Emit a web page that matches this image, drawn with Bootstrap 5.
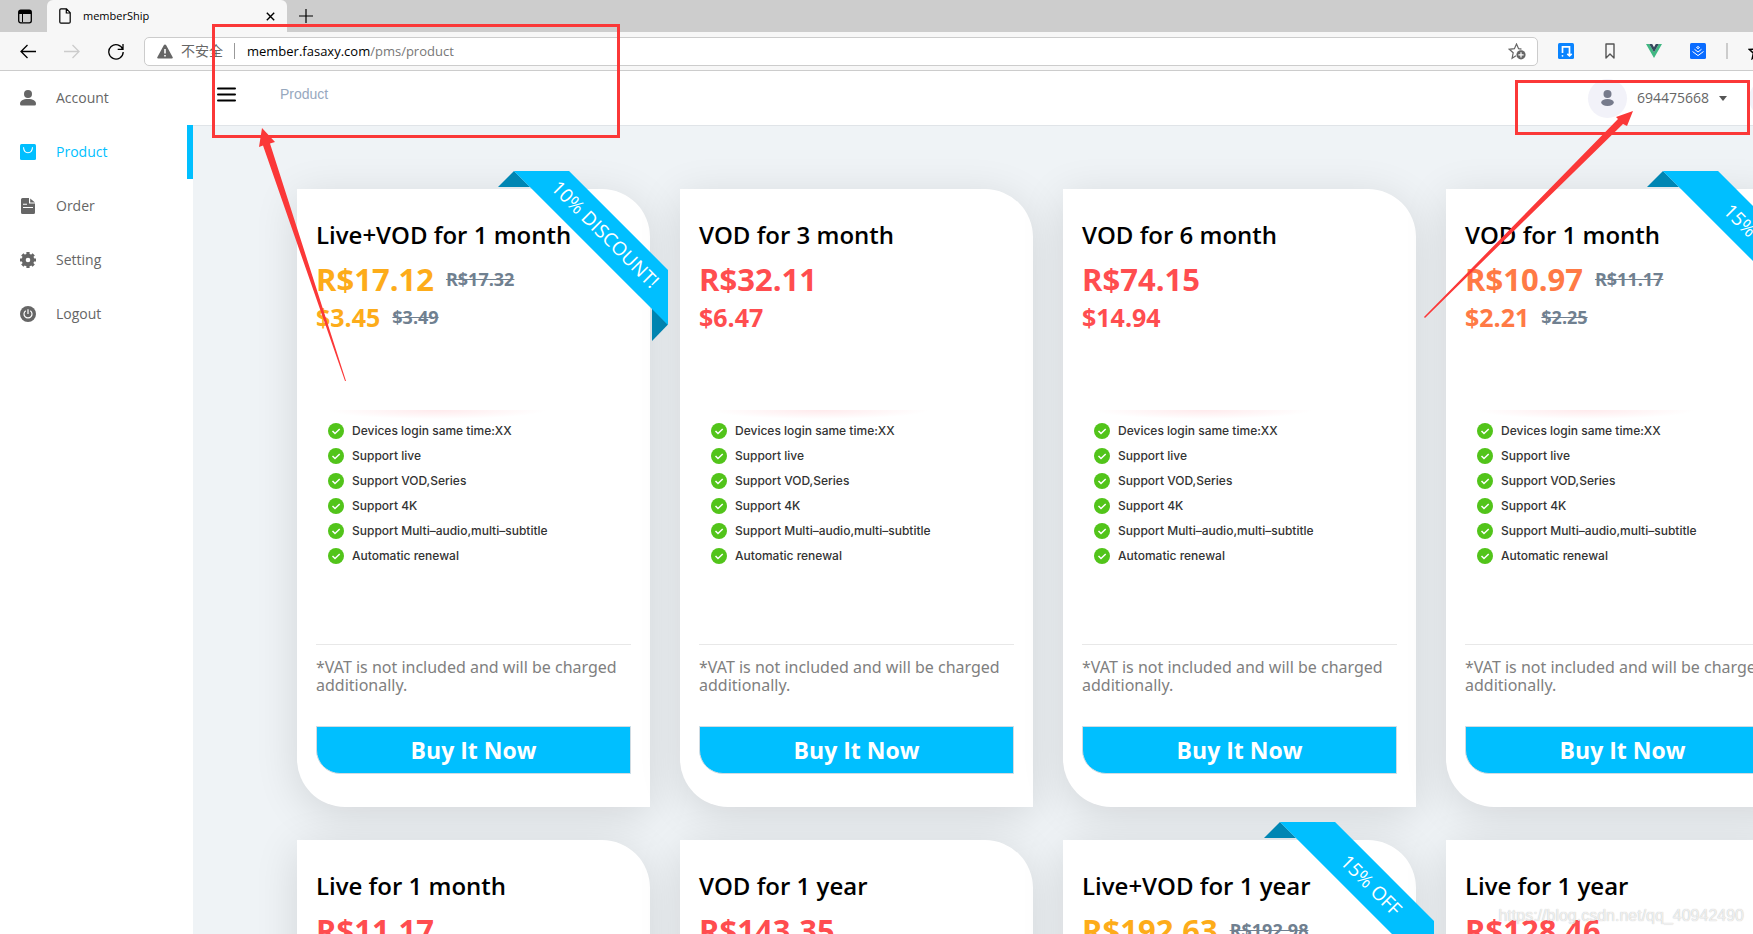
<!DOCTYPE html>
<html lang="en">
<head>
<meta charset="utf-8">
<meta name="viewport" content="width=device-width, initial-scale=1">
<title>memberShip</title>
<link rel="stylesheet" href="https://cdn.jsdelivr.net/npm/bootstrap@5.3.0/dist/css/bootstrap.min.css">
<style>
  :root { --brand: #00bfff; --fold: #0086b3; --ink: #666; --canvas: #eff3f6; --note: #fb3838; }
  body { font-family: "Open Sans", "Noto Sans CJK SC", sans-serif; font-size: 14px; line-height: 20px; color: #000; }
  svg { display: block; flex: none; }
  button { font-family: inherit; }

  /* browser frame */
  .tab-strip { height: 32px; background: #cdcdcd; }
  .tab-tools { width: 47px; padding-left: 3px; }
  .page-tab { width: 240px; padding: 0 12px; background: #f7f7f7; border-radius: 6px 6px 0 0; font-size: 11px; line-height: 16px; gap: 12px; }
  .plain-btn { border: 0; background: none; padding: 0; color: #000; }
  .tool-strip { height: 39px; background: #f7f7f7; border-bottom: 1px solid #ccc; padding-left: 20px; }
  .nav-tools { width: 124px; gap: 28px; }
  .address { height: 29px; background: #fff; border: 1px solid #ccc; border-radius: 5px; padding: 0 11px 0 12px; }
  .address .insecure { color: #666; padding: 0 11px 0 8px; }
  .address .divider { width: 1px; height: 16px; background: #999; }
  .address .url { padding-left: 12px; color: #777; font-size: 13px; }
  .address .url b { font-weight: 400; color: #000; }
  .ext-tools { width: 215px; padding-left: 20px; gap: 28px; overflow: hidden; }
  .ext-tools .ext-end { gap: 20px; margin-left: -8px; }
  .ext-tools .divider { width: 2px; height: 16px; background: #ccc; }

  /* application */
  .side { width: 193px; flex: none; background: #fff; }
  .side a { height: 54px; padding-left: 20px; gap: 20px; color: var(--ink); text-decoration: none; font-size: 14px; border-right: 6px solid transparent; }
  .side a.active { color: var(--brand); border-color: var(--brand); }
  .top-line { height: 55px; border-bottom: 1px solid #e0e4e8; background: #fff; padding-left: 24px; overflow: hidden; }
  .crumb { color: #97a8be; font-family: "Liberation Sans", sans-serif; text-decoration: none; margin-left: 44px; }
  .who { color: var(--ink); gap: 10px; margin-right: 22px; font-size: 14px; }
  .avatar { width: 39px; height: 39px; border-radius: 50%; background: #f2f2f9; color: #777b8c; flex: none; }
  .avatar.next { margin-right: -35px; }
  .caret { border: 4px solid transparent; border-top: 5px solid #555; border-bottom: 0; }
  .shop { background: var(--canvas); padding: 63px 0 0 104px; overflow: hidden; }
  .plans { display: grid; grid-template-columns: repeat(4, 353px); gap: 33px 30px; }
  .plan { height: 618px; background: #fff; border-radius: 0 48px 0 48px; padding: 30px 19px 33px; box-shadow: 0 8px 44px rgba(0, 0, 0, .12); }
  .plan h2 { font-size: 24px; line-height: 32px; font-weight: 600; margin: 0 0 8px; white-space: nowrap; }
  .price { font-size: 31px; line-height: 40px; font-weight: 700; gap: 12px; }
  .price.usd { font-size: 25px; line-height: 36px; }
  .price del { font-size: 18px; font-weight: 700; color: #708090; }
  .gold { color: #fdac1a; } .red { color: #ff4d4f; } .orange { color: #ff7a45; }
  .perks { margin: 75px 0 76px; padding: 8px 0 0 12px; list-style: none; font-family: Inter, sans-serif; font-size: 12px; font-weight: 500; color: #333;
           background: radial-gradient(ellipse 50% 100% at 50% 0, #ffeaec, #fff) 12px 0 / 218px 9px no-repeat; }
  .perks li { height: 25px; gap: 8px; }
  .vat { border-top: 1px solid #e8e8e8; padding-top: 13px; margin: 0 0 32px; font-family: "Noto Sans", sans-serif; font-size: 16px; line-height: 18px; color: #808080; }
  .buy { width: 100%; height: 48px; border: 1px solid #d0dbe2; border-radius: 0 0 0 24px; background: var(--brand); color: #fff; font-size: 23px; line-height: 32px; font-weight: 700; padding: 0; }

  .ribbon { position: absolute; top: -18px; right: -18px; width: 170px; height: 170px; overflow: hidden; color: #fff; pointer-events: none; }
  .ribbon::before, .ribbon::after { content: ""; position: absolute; background: var(--fold); }
  .ribbon::before { left: 0; top: 0; width: 32px; height: 16px; clip-path: polygon(0 100%, 50% 0, 100% 100%); }
  .ribbon::after { right: 0; bottom: 0; width: 16px; height: 33px; clip-path: polygon(0 0, 100% 50%, 0 100%); }
  .ribbon span { position: absolute; z-index: 1; left: -13px; top: 44px; width: 240px; height: 39px; line-height: 39px; text-align: center; font-size: 19px; background: var(--brand); transform: rotate(45deg); }

  /* review marks drawn over the page */
  .marks { position: absolute; top: 0; pointer-events: none; }
  .marks.start { left: 0; } .marks.end { right: 0; }
  .stamp { position: absolute; right: 9px; bottom: 8px; font-family: "Liberation Sans", sans-serif; font-size: 16px; line-height: 20px; color: rgba(255,255,255,.75); text-shadow: 0 0 1px rgba(0,0,0,.3); }
</style>
</head>
<body class="vh-100 overflow-hidden position-relative d-flex flex-column">

<svg class="d-none">
  <symbol id="i-user" viewBox="0 0 16 16"><circle cx="8" cy="4" r="4"/><path d="M0 14c0-3.500 3-5 8-5s8 1.500 8 5q0 1.500-1.500 1.500h-13Q0 15.500 0 14Z"/></symbol>
  <symbol id="i-person" viewBox="0 0 13 16"><circle cx="6.500" cy="4" r="4"/><ellipse cx="6.500" cy="12.500" rx="6.300" ry="3.400"/></symbol>
  <symbol id="i-check" viewBox="0 0 16 16"><circle cx="8" cy="8" r="8" fill="#52c41a"/><path d="m4.500 8 2.500 2.500L11.700 6" fill="none" stroke="#fff" stroke-width="1.500"/></symbol>
</svg>

<div class="tab-strip d-flex flex-shrink-0">
  <div class="tab-tools d-flex align-items-center justify-content-center">
    <button class="plain-btn" aria-label="Tab actions"><svg width="14" height="15" viewBox="0 0 14 15"><rect x=".7" y="1.200" width="12.600" height="12.600" rx="2" fill="none" stroke="#000" stroke-width="1.300"/><path d="M1 1h12v4H1z"/><path d="M4.500 4v9" stroke="#000"/></svg></button>
  </div>
  <div class="page-tab d-flex align-items-center">
    <svg width="12" height="16" viewBox="0 0 12 16" fill="none" stroke="#000" stroke-width="1.200"><path d="M2 .8h5.500l3.700 3.900V14q0 1.200-1.200 1.200H2Q.8 15.200.8 14V2Q.8.800 2 .800Zm5.300 0v4.200h4"/></svg>
    <span class="flex-grow-1">memberShip</span>
    <button class="plain-btn" aria-label="Close tab"><svg width="9" height="9" viewBox="0 0 9 9"><path d="m.8.800 7.400 7.400m0-7.400L.8 8.200" stroke="#000" stroke-width="1.400"/></svg></button>
  </div>
  <button class="plain-btn ms-2 ps-1" aria-label="New tab"><svg width="14" height="14" viewBox="0 0 14 14"><path d="M7 0v14M0 7h14" stroke="#000" stroke-width="1.200"/></svg></button>
</div>

<div class="tool-strip d-flex align-items-center flex-shrink-0">
  <div class="nav-tools d-flex align-items-center flex-shrink-0">
    <button class="plain-btn" aria-label="Back"><svg width="16" height="15" viewBox="0 0 16 15" fill="none" stroke="#000" stroke-width="1.300"><path d="M16 7.500H1M7.500 1 1 7.500 7.500 14"/></svg></button>
    <button class="plain-btn" aria-label="Forward"><svg width="16" height="15" viewBox="0 0 16 15" fill="none" stroke="#ccc" stroke-width="1.300"><path d="M0 7.500h15M8.500 1 15 7.500 8.500 14"/></svg></button>
    <button class="plain-btn" aria-label="Reload"><svg width="16" height="17" viewBox="0 0 16 17" fill="none" stroke="#000" stroke-width="1.300"><path d="M14.800 6.500A7.200 7.200 0 1 0 15.200 9M15 1v5.300H9.700"/></svg></button>
  </div>
  <div class="address d-flex align-items-center flex-grow-1">
    <svg width="16" height="15" viewBox="0 0 16 15"><path d="M8 .5q.8 0 1.200.8l6.500 12q.5 1.200-.9 1.200H1.200q-1.400 0-.9-1.200l6.500-12Q7.200.5 8 .5Z" fill="#666"/><path d="M8 5v4.500M8 11v1.600" stroke="#fff" stroke-width="1.600"/></svg>
    <span class="insecure">不安全</span><span class="divider"></span>
    <span class="url flex-grow-1"><b>member.fasaxy.com</b>/pms/product</span>
    <button class="plain-btn" aria-label="Add to favourites"><svg width="18" height="17" viewBox="0 0 18 17"><path d="M13.500 6.200 10.600 5.700 8.500 1 6.400 5.700 1.300 6.300 5.200 9.800 4.100 15.200 8 12.800" fill="none" stroke="#666" stroke-width="1.200"/><circle cx="13" cy="11.800" r="4.600" fill="#666"/><path d="M13 9.200v5.200M10.400 11.800h5.200" stroke="#fff" stroke-width="1.200"/></svg></button>
  </div>
  <div class="ext-tools d-flex align-items-center flex-shrink-0">
    <svg width="16" height="16" viewBox="0 0 16 16"><rect width="16" height="16" rx="1.500" fill="#0a84ff"/><path d="M4.500 10V3.800h7V12M9.300 10.800l2.200 2 2.200-2" fill="none" stroke="#fff" stroke-width="1.700"/><circle cx="4.500" cy="12.800" r=".9" fill="#fff"/></svg>
    <svg width="16" height="16" viewBox="0 0 16 16"><path d="M4 1h8v14l-4-4-4 4Z" fill="none" stroke="#555" stroke-width="1.400" stroke-linejoin="round"/></svg>
    <svg width="16" height="14" viewBox="0 0 16 14"><path d="M0 0h3.200L8 8.300 12.800 0H16L8 14Z" fill="#41b883"/><path d="M3.200 0h3L8 3.200 9.800 0h3L8 8.300Z" fill="#35495e"/></svg>
    <svg width="16" height="16" viewBox="0 0 16 16"><rect width="16" height="16" rx="1.500" fill="#0a6cff"/><path d="m6.500 4.500 1.500-1 1.500 1L8 5.700ZM4.500 6.300 8 9l3.500-2.700M2.500 8.500 8 12.600l5.500-4.100" fill="none" stroke="#fff"/></svg>
    <div class="ext-end d-flex align-items-center flex-shrink-0">
      <span class="divider"></span>
      <svg width="18" height="17" viewBox="0 0 18 17"><path d="m9 1 2.300 5 5.400.5-4.100 3.700 1.200 5.500L9 12.900l-4.800 2.800 1.200-5.500L1.300 6.500 6.700 6Z" fill="none" stroke="#000" stroke-width="1.500"/></svg>
    </div>
  </div>
</div>

<div class="d-flex flex-grow-1 overflow-hidden">
  <nav class="side" aria-label="Main">
    <a class="d-flex align-items-center" href="#account"><svg width="16" height="16" fill="#666"><use href="#i-user"/></svg>Account</a>
    <a class="d-flex align-items-center active" href="#product"><svg width="16" height="16" viewBox="0 0 16 16"><rect width="16" height="16" rx="1.500" fill="#00bfff"/><path d="M3.500 3.200C4 10.500 12 10.500 12.500 3.200" fill="none" stroke="#fff" stroke-width="1.100"/></svg>Product</a>
    <a class="d-flex align-items-center" href="#order"><svg width="16" height="16" viewBox="0 0 16 16"><path d="M2.500 0H9v5.500h6V14.500q0 1.500-1.500 1.500h-11Q1 16 1 14.500v-13Q1 0 2.500 0Z" fill="#666"/><path d="M10.200.5 15 4.500h-4.800Z" fill="#666"/><path d="M3 6.200h4M3 9.500h10" stroke="#fff" stroke-width="1.100"/></svg>Order</a>
    <a class="d-flex align-items-center" href="#setting"><svg width="16" height="16" viewBox="0 0 16 16"><circle cx="8" cy="8" r="4.300" fill="none" stroke="#666" stroke-width="4"/><path d="M8 0v3M8 13v3M0 8h3M13 8h3M2.300 2.300l2 2M11.700 11.700l2 2M2.300 13.700l2-2M11.700 4.300l2-2" stroke="#666" stroke-width="3.200"/></svg>Setting</a>
    <a class="d-flex align-items-center" href="#logout"><svg width="16" height="16" viewBox="0 0 16 16"><circle cx="8" cy="8" r="8" fill="#666"/><path d="M5.700 4.700a4 4 0 1 0 4.600 0M8 3.300V8" fill="none" stroke="#fff" stroke-width="1.200"/></svg>Logout</a>
  </nav>

  <div class="flex-grow-1 d-flex flex-column overflow-hidden">
    <header class="top-line d-flex align-items-center flex-shrink-0">
      <div class="d-flex align-items-center flex-grow-1 pb-2">
        <button class="plain-btn" aria-label="Toggle menu"><svg width="19" height="15" viewBox="0 0 19 15"><path d="M1 1.500h17M1 7.500h17M1 13.500h17" stroke="#000" stroke-width="2" stroke-linecap="round"/></svg></button>
        <a class="crumb" href="#product">Product</a>
      </div>
      <button class="plain-btn who d-flex align-items-center"><span class="avatar d-flex align-items-center justify-content-center"><svg width="13" height="16" fill="currentColor"><use href="#i-person"/></svg></span>694475668<span class="caret"></span></button>
      <span class="avatar next"></span>
    </header>
    <main class="shop flex-grow-1"><div class="plans" id="plans"></div></main>
  </div>
</div>

<svg class="marks start" width="640" height="400" fill="#fb3838">
  <rect x="213.500" y="25.500" width="405" height="111" fill="none" stroke="#fb3838" stroke-width="3"/>
  <path d="m262 128 13 14-5 1.500L346 381h-1L263 145.500l-4 1.500Z"/>
</svg>
<svg class="marks end" width="353" height="330" fill="#fb3838">
  <rect x="116.500" y="81.500" width="232" height="52" fill="none" stroke="#fb3838" stroke-width="3"/>
  <path d="m233 111-6 15-4-2L25 318l-1-1L218 119l-2-2Z"/>
</svg>
<div class="stamp">https://blog.csdn.net/qq_40942490</div>

<script src="https://cdn.jsdelivr.net/npm/bootstrap@5.3.0/dist/js/bootstrap.bundle.min.js"></script>
<script>
  const perks = ["Devices login same time:XX", "Support live", "Support VOD,Series", "Support 4K", "Support Multi–audio,multi–subtitle", "Automatic renewal"];
  const plans = [
    { name: "Live+VOD for 1 month", tone: "gold", brl: "17.12", brlOld: "17.32", usd: "3.45", usdOld: "3.49", tag: "10% DISCOUNT!" },
    { name: "VOD for 3 month", tone: "red", brl: "32.11", usd: "6.47" },
    { name: "VOD for 6 month", tone: "red", brl: "74.15", usd: "14.94" },
    { name: "VOD for 1 month", tone: "orange", brl: "10.97", brlOld: "11.17", usd: "2.21", usdOld: "2.25", tag: "15% OFF" },
    { name: "Live for 1 month", tone: "red", brl: "11.17", usd: "2.25" },
    { name: "VOD for 1 year", tone: "red", brl: "143.35", usd: "28.88" },
    { name: "Live+VOD for 1 year", tone: "gold", brl: "192.63", brlOld: "192.98", usd: "38.81", usdOld: "38.88", tag: "15% OFF" },
    { name: "Live for 1 year", tone: "red", brl: "128.46", usd: "25.88" }
  ];
  const old = (sign, v) => v ? `<del>${sign}${v}</del>` : "";
  document.getElementById("plans").innerHTML = plans.map(p => `
    <article class="plan position-relative">
      <h2>${p.name}</h2>
      <div class="price d-flex align-items-center ${p.tone}">R$${p.brl}${old("R$", p.brlOld)}</div>
      <div class="price usd d-flex align-items-center ${p.tone}">$${p.usd}${old("$", p.usdOld)}</div>
      <ul class="perks">${perks.map(t => `<li class="d-flex align-items-center"><svg width="16" height="16"><use href="#i-check"/></svg>${t}</li>`).join("")}</ul>
      <p class="vat">*VAT is not included and will be charged additionally.</p>
      <button class="buy">Buy It Now</button>
      ${p.tag ? `<div class="ribbon"><span>${p.tag}</span></div>` : ""}
    </article>`).join("");
</script>
</body>
</html>
